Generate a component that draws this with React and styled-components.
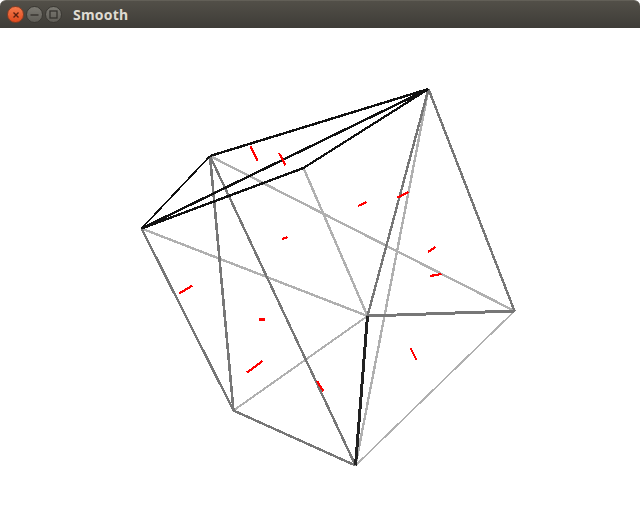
import React from "react";
import styled, { createGlobalStyle } from "styled-components";

const Global = createGlobalStyle`
  html, body { margin: 0; padding: 0; background: #fff; }
  body { width: 640px; height: 508px; overflow: hidden; }
`;
const Window = styled.div`
  width: 640px; height: 508px; display: flex; flex-direction: column; background: #fff;
`;
const TitleBar = styled.header`
  height: 28px; flex: none; display: flex; align-items: center; gap: 2px;
  padding: 0 0 0 7px; box-sizing: border-box;
  background: linear-gradient(#524f48, #3e3c37);
  border-top: 1px solid #625f57;
  border-radius: 6px 6px 0 0;
`;
const WinButton = styled.button`
  width: 17px; height: 17px; padding: 0; border-radius: 50%; display: flex;
  align-items: center; justify-content: center;
  border: 1px solid ${p => (p.$close ? "#8a3d22" : "#3a3833")};
  background: ${p => (p.$close ? "linear-gradient(#f47a4c, #e04a1e)" : "linear-gradient(#7b7972, #5f5d57)")};
`;
const Title = styled.span`
  margin-left: 9px; font: 700 14px "Noto Sans", "Open Sans", sans-serif; letter-spacing: 0.2px; color: #dfdbd2;
`;
const Canvas = styled.svg`
  flex: 1; display: block; width: 640px;
`;
const V = { A:[428.5,89],B:[210,156],C:[141.5,228.5],D:[303.5,168],E:[514.5,311],F:[367.5,316],G:[233.5,410.5],H:[355.5,465.5] };
const edges = [
  ["B","E","#b0b0b0",2.4],["C","F","#b0b0b0",2.4],["D","F","#b0b0b0",2.4],["A","H","#b0b0b0",2.4],["F","G","#b0b0b0",2],["E","H","#b0b0b0",1.7],
  ["A","E","#777",2.4],["A","F","#777",2.4],["B","G","#777",2.6],["B","H","#777",2.4],["C","G","#777",2.4],["G","H","#777",2.4],["F","E","#777",3],
  ["F","H","#222",3],
  ["B","A","#111",2.4],["C","A","#111",2.4],["D","A","#111",2.2],["C","D","#111",2.4],["C","B","#111",1.7],
];
const reds = [
  [250.5,146,257.5,161],[279,153,285.5,165.5],[282,239,287.5,237],[358,206,366.5,202],[397,197.5,408.5,192],[428,252,435.5,247],
  [430,276,441.5,274],[179,293.5,192.5,285.5],[259,319.5,264.5,319.5],[247,372.5,262.5,361],[317,381,323.5,391.5],[410.5,348,416.5,360],
];
export default function App() {
  return (
    <Window>
      <Global />
      <TitleBar>
        <WinButton $close>
          <svg width="8" height="8" viewBox="0 0 8 8"><path d="M1.5 1.5l5 5M6.5 1.5l-5 5" stroke="#5a2010" strokeWidth="1.4"/></svg>
        </WinButton>
        <WinButton>
          <svg width="9" height="8" viewBox="0 0 9 8"><path d="M0.5 4h8" stroke="#35332f" strokeWidth="1.4"/></svg>
        </WinButton>
        <WinButton>
          <svg width="9" height="9" viewBox="0 0 9 9"><rect x="1" y="1" width="7" height="7" fill="none" stroke="#35332f" strokeWidth="1.3"/></svg>
        </WinButton>
        <Title>Smooth</Title>
      </TitleBar>
      <Canvas viewBox="0 28 640 480" shapeRendering="crispEdges">
        {edges.map(([a,b,c,w]) => (
          <line key={a+b} x1={V[a][0]} y1={V[a][1]} x2={V[b][0]} y2={V[b][1]} stroke={c} strokeWidth={w}/>
        ))}
        {reds.map((r,i) => (
          <line key={i} x1={r[0]} y1={r[1]} x2={r[2]} y2={r[3]} stroke="#f00" strokeWidth="2.2"/>
        ))}
      </Canvas>
    </Window>
  );
}
